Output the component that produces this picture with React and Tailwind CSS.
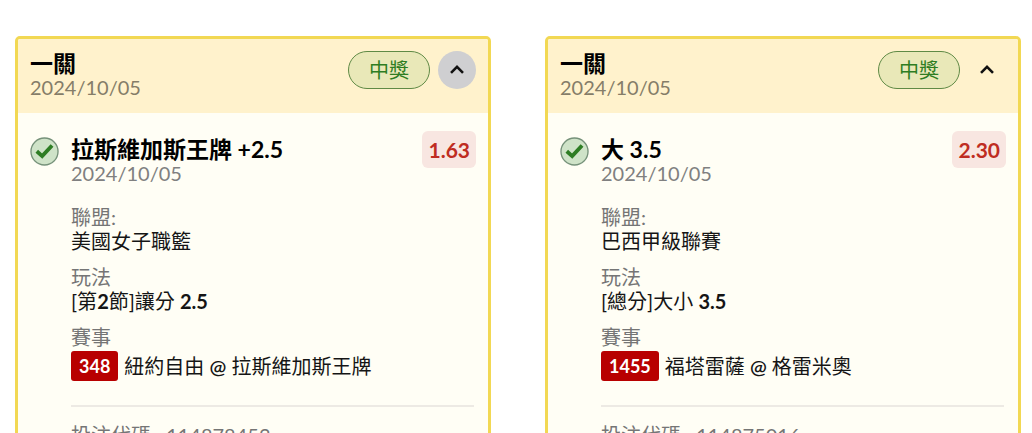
import { useState } from "react";

const bets = [
  {
    code: "114878453",
    pick: "拉斯維加斯王牌",
    line: "+2.5",
    odds: "1.63",
    league: "美國女子職籃",
    play: (
      <>
        [第<b className="font-bold">2</b>節]讓分 <b className="font-bold">2.5</b>
      </>
    ),
    number: "348",
    home: "紐約自由",
    away: "拉斯維加斯王牌",
    active: true,
  },
  {
    code: "114875016",
    pick: "大",
    line: "3.5",
    odds: "2.30",
    league: "巴西甲級聯賽",
    play: (
      <>
        [總分]大小 <b className="font-bold">3.5</b>
      </>
    ),
    number: "1455",
    home: "福塔雷薩",
    away: "格雷米奧",
    active: false,
  },
];

function CheckBadge() {
  return (
    <svg viewBox="0 0 30 30" className="size-[29px] shrink-0" role="img" aria-label="中獎">
      <circle cx="15" cy="15" r="14" fill="#cfe3c8" stroke="#76927a" strokeWidth="1.4" />
      <path d="M7 14.8 12.6 19.8 22.8 8.8" fill="none" stroke="#2e7d24" strokeWidth="4" />
    </svg>
  );
}

function Field({ label, children }) {
  return (
    <div>
      <dt className="text-[#757575]">{label}</dt>
      <dd>{children}</dd>
    </div>
  );
}

function BetCard({ bet }) {
  const [open, setOpen] = useState(true);
  return (
    <article className="min-w-0 flex-1 overflow-hidden rounded-[5px] border-3 border-[#f2d853] bg-[#fffef5]">
      <header className="flex items-start justify-between bg-[#fff2cc] px-3 pt-3 pb-3">
        <div className="pb-0.5">
          <h2 className="text-[23px] leading-6 font-bold text-black">一關</h2>
          <time className="block text-[#857d68]">2024/10/05</time>
        </div>
        <div className="flex items-center gap-2">
          <span className="flex h-[38px] items-center rounded-full border border-[#5f8a45] bg-[#e9e8b8] px-5 text-[#2e7d22]">
            中獎
          </span>
          <button
            type="button"
            aria-label="收合"
            aria-expanded={open}
            onClick={() => setOpen(!open)}
            className={
              bet.active
                ? "flex size-[38px] items-center justify-center rounded-full bg-[#cfcfd1]"
                : "flex size-[38px] items-center justify-center rounded-full"
            }
          >
            <svg viewBox="0 0 16 12" className="h-3 w-4" aria-hidden="true">
              <path d="M2 8.8 8 2.8 14 8.8" fill="none" stroke="#111" strokeWidth="2.6" />
            </svg>
          </button>
        </div>
      </header>
      {open && (
        <div className="flex gap-3 px-3 pt-6 pb-6">
          <CheckBadge />
          <div className="min-w-0 flex-1">
            <div className="flex items-start justify-between">
              <div>
                <h3 className="text-[23px] leading-6 font-bold text-black">
                  {bet.pick} {bet.line}
                </h3>
                <time className="block text-[#808080]">2024/10/05</time>
              </div>
              <span className="-mt-1.5 flex h-[37px] items-center rounded-md bg-[#f8e6e1] px-1.5 text-[21px] font-bold text-[#bf2c22]">
                {bet.odds}
              </span>
            </div>
            <dl className="mt-5 flex flex-col gap-3 text-[#151515]">
              <Field label="聯盟:">{bet.league}</Field>
              <Field label="玩法">{bet.play}</Field>
              <Field label="賽事">
                <span className="mt-0.5 flex items-center gap-1.5">
                  <span className="flex h-[30px] items-center rounded-[3px] bg-[#b80000] px-2 text-[18px] font-bold text-white">
                    {bet.number}
                  </span>
                  <span>
                    {bet.home} <span className="font-semibold">@</span> {bet.away}
                  </span>
                </span>
              </Field>
            </dl>
            <hr className="mt-6 mr-0.5 border-t-2 border-[#edeae4]" />
            <p className="mt-4 text-[#757575]">投注代碼:: {bet.code}</p>
          </div>
        </div>
      )}
    </article>
  );
}

export default function App() {
  return (
    <main className="flex h-screen items-start gap-[54px] overflow-hidden bg-white pt-9 pr-[11px] pl-[15px] font-[Lato,'Noto_Sans_CJK_TC',sans-serif] text-[20px] leading-6">
      {bets.map((bet) => (
        <BetCard key={bet.code} bet={bet} />
      ))}
    </main>
  );
}
